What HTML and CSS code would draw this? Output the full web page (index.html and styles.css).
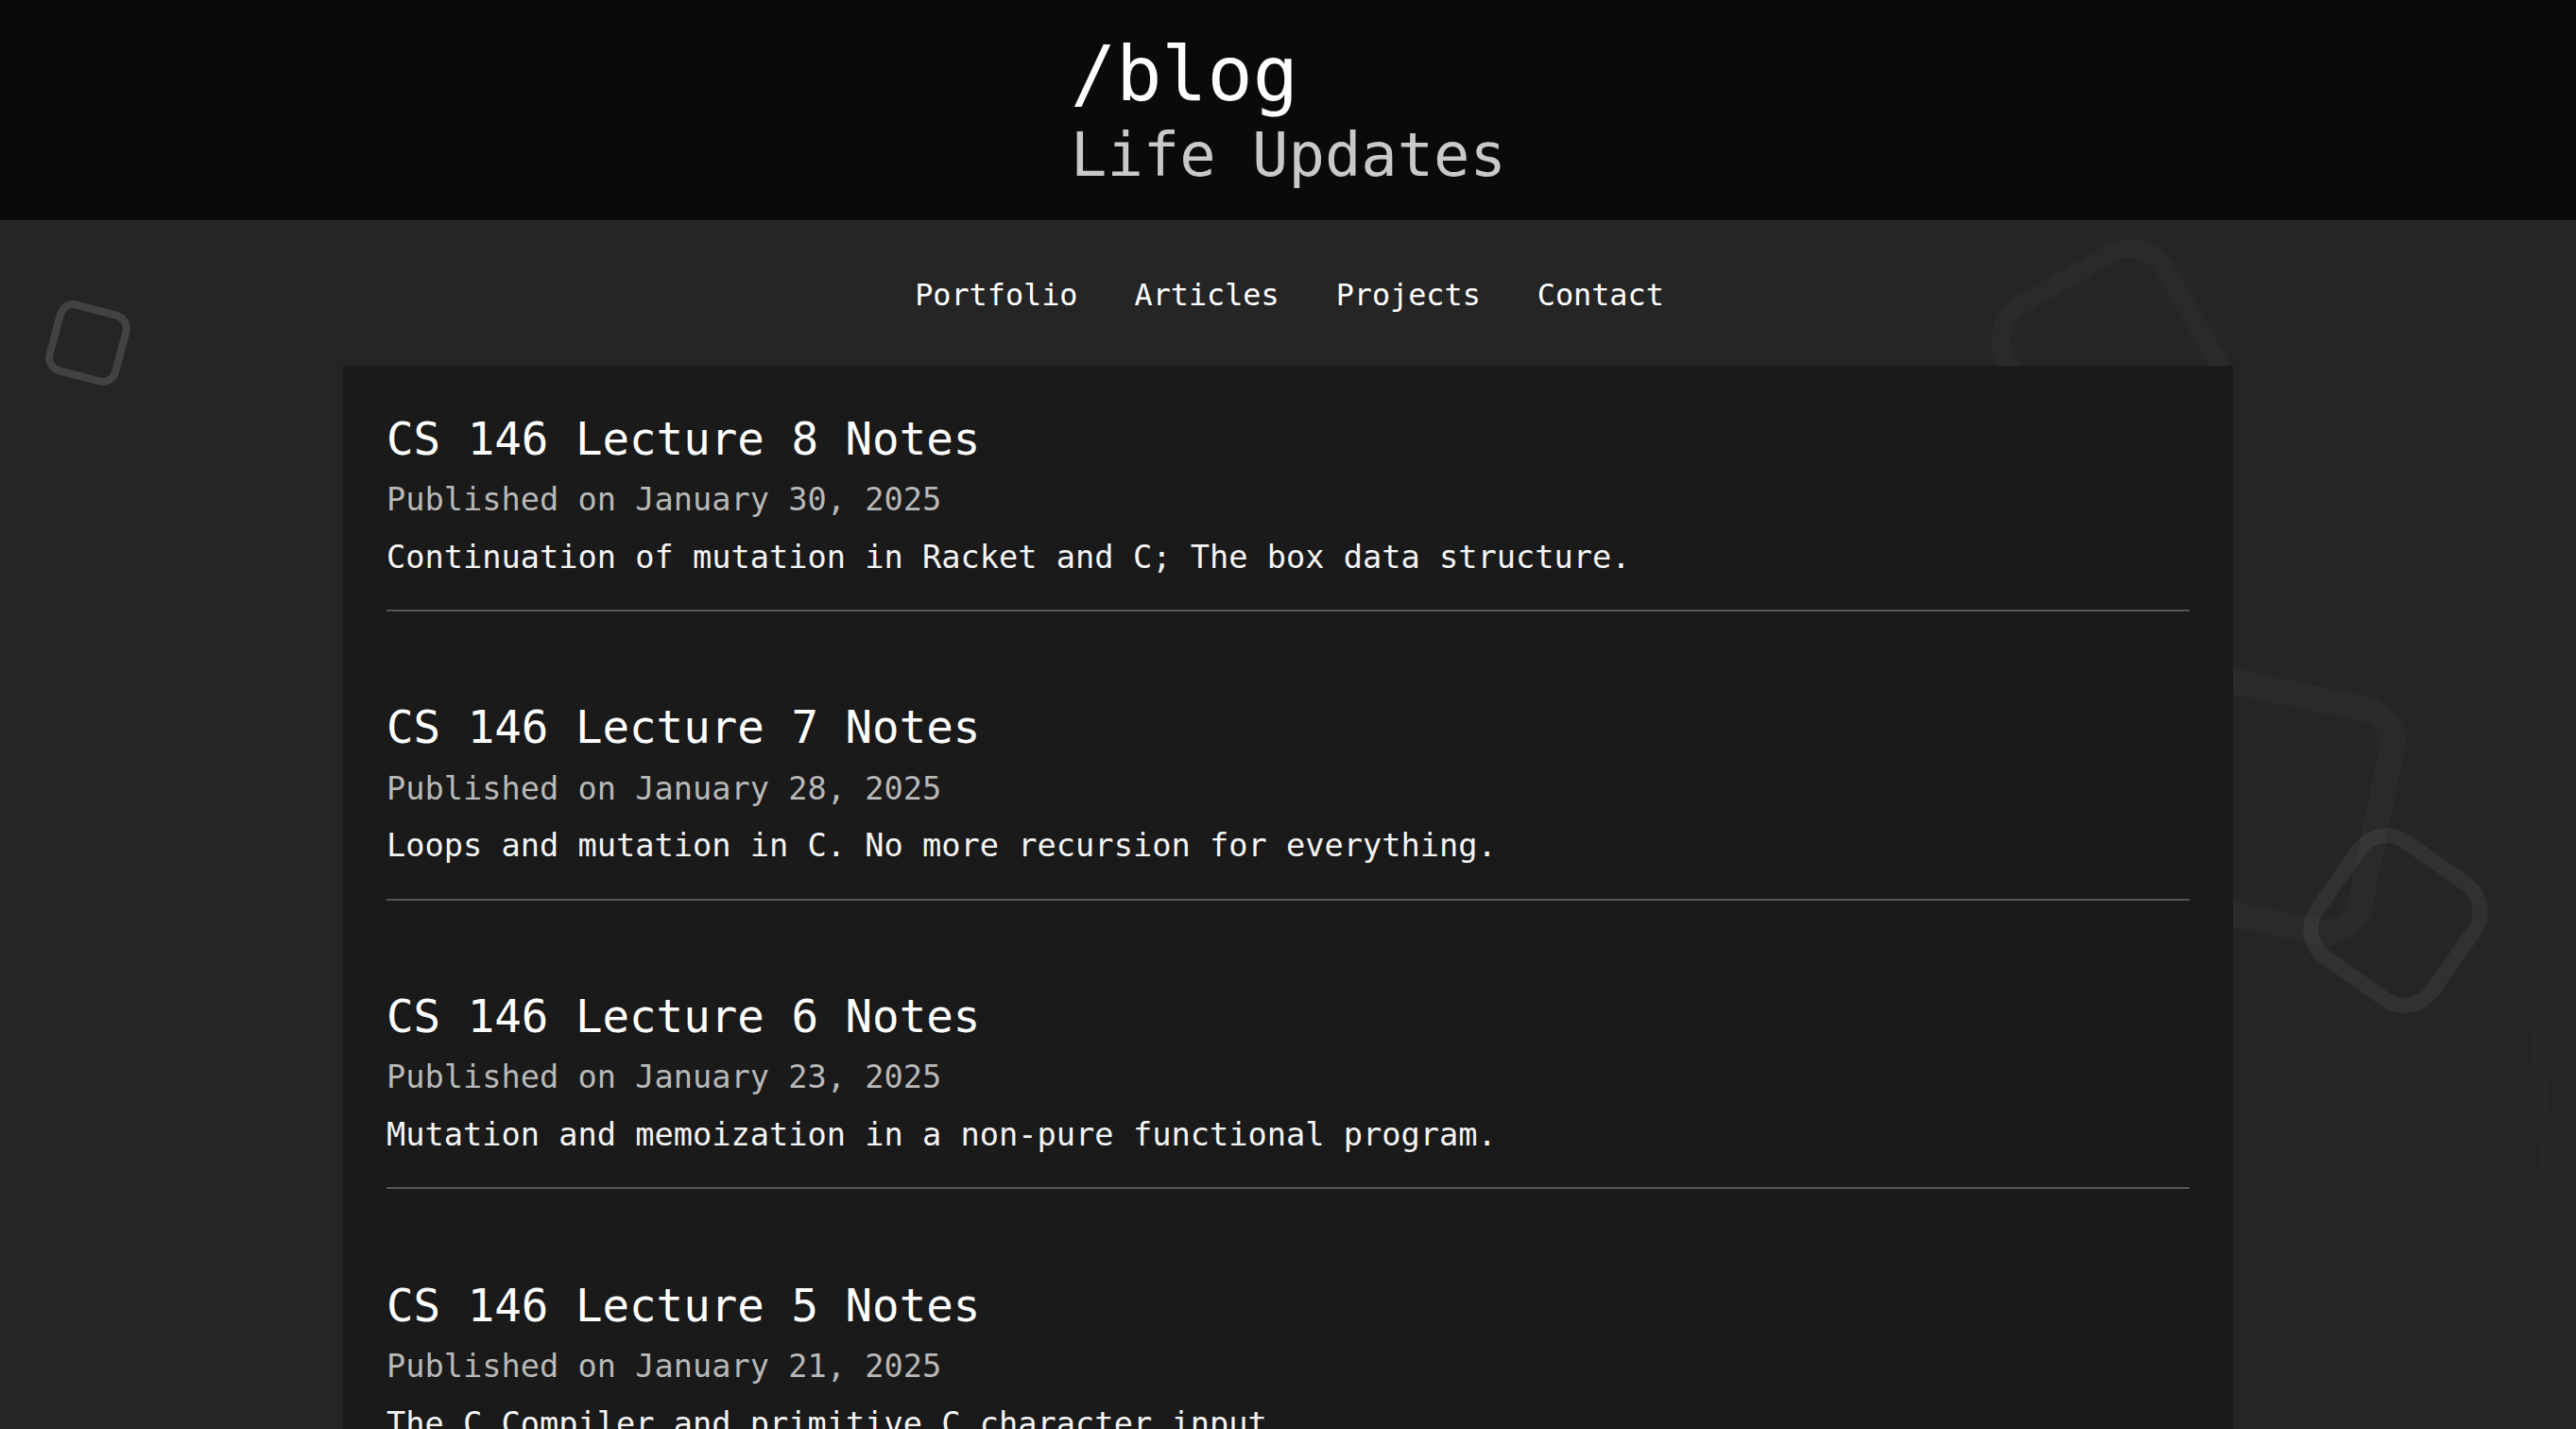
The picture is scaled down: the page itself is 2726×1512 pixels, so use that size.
FILE: index.html
```html
<!DOCTYPE html>
<html lang="en">
<head>
<meta charset="utf-8">
<title>/blog — Life Updates</title>
<link rel="stylesheet" href="styles.css">
</head>
<body>
<svg class="bg-shapes" viewBox="0 0 2726 1512" aria-hidden="true">
  <rect class="shape shape-faint" x="-96.5" y="-96.5" width="193" height="193" rx="43" stroke-width="20" transform="translate(2234 379) rotate(-30)"/>
  <rect class="shape shape-faint" x="-120.5" y="-120.5" width="241" height="241" rx="37" stroke-width="27" transform="translate(2396 851) rotate(11.7)"/>
  <rect class="shape shape-mid" x="-74.5" y="-74.5" width="149" height="149" rx="36" stroke-width="16" transform="translate(2535 974) rotate(35)"/>
  <rect class="shape shape-strong" x="-36" y="-36" width="72" height="72" rx="14" stroke-width="8" transform="translate(93 363) rotate(15)"/>
  <rect class="shape shape-ghost" x="-100" y="-100" width="200" height="200" rx="40" stroke-width="14" transform="translate(2790 1162) rotate(-4)"/>
</svg>

<header class="site-header">
  <div class="brand">
    <h1 class="brand-title">/blog</h1>
    <p class="brand-sub">Life Updates</p>
  </div>
</header>

<nav class="site-nav">
  <a class="nav-link" href="#">Portfolio</a>
  <a class="nav-link" href="#">Articles</a>
  <a class="nav-link" href="#">Projects</a>
  <a class="nav-link" href="#">Contact</a>
</nav>

<main class="posts">
  <article class="post">
    <h2 class="post-title">CS 146 Lecture 8 Notes</h2>
    <p class="post-date">Published on January 30, 2025</p>
    <p class="post-desc">Continuation of mutation in Racket and C; The box data structure.</p>
  </article>
  <article class="post">
    <h2 class="post-title">CS 146 Lecture 7 Notes</h2>
    <p class="post-date">Published on January 28, 2025</p>
    <p class="post-desc">Loops and mutation in C. No more recursion for everything.</p>
  </article>
  <article class="post">
    <h2 class="post-title">CS 146 Lecture 6 Notes</h2>
    <p class="post-date">Published on January 23, 2025</p>
    <p class="post-desc">Mutation and memoization in a non-pure functional program.</p>
  </article>
  <article class="post">
    <h2 class="post-title">CS 146 Lecture 5 Notes</h2>
    <p class="post-date">Published on January 21, 2025</p>
    <p class="post-desc">The C Compiler and primitive C character input.</p>
  </article>
  <article class="post">
    <h2 class="post-title">CS 146 Lecture 4 Notes</h2>
    <p class="post-date">Published on January 16, 2025</p>
    <p class="post-desc">Introduction to C: types, functions and printf.</p>
  </article>
</main>
</body>
</html>
```

FILE: styles.css
```css
html {
  scrollbar-width: none;
}
::-webkit-scrollbar {
  display: none;
}

body {
  margin: 0;
  position: relative;
  background: #252525;
  color: #ffffff;
  font-family: "DejaVu Sans Mono", "Liberation Mono", monospace;
}

.bg-shapes {
  position: absolute;
  top: 0;
  left: 0;
  width: 2726px;
  height: 1512px;
  z-index: 0;
  pointer-events: none;
  overflow: hidden;
}

.shape {
  fill: none;
}
.shape-faint {
  stroke: rgba(255, 255, 255, 0.022);
}
.shape-mid {
  stroke: rgba(255, 255, 255, 0.058);
}
.shape-strong {
  stroke: rgba(255, 255, 255, 0.135);
}
.shape-ghost {
  stroke: rgba(255, 255, 255, 0.01);
}

.site-header {
  position: relative;
  z-index: 1;
  background: #0a0a0a;
  display: flex;
  justify-content: center;
  padding: 33.8px 0 32px 1px;
}

.brand {
  display: flex;
  flex-direction: column;
  gap: 5.7px;
}

.brand-title {
  margin: 0;
  font-size: 80px;
  line-height: 90px;
  font-weight: normal;
  color: #ffffff;
}

.brand-sub {
  margin: 0;
  font-size: 63.8px;
  line-height: 71.5px;
  color: #c9c9c9;
}

.site-nav {
  position: relative;
  z-index: 1;
  display: flex;
  justify-content: center;
  gap: 60px;
  padding: 59.2px 0 54.8px 3px;
}

.nav-link {
  font-size: 31.8px;
  line-height: 40px;
  color: #ffffff;
  text-decoration: none;
}

.posts {
  position: relative;
  z-index: 1;
  width: 2000px;
  box-sizing: border-box;
  margin: 0 auto;
  padding: 48.8px 46px 60px;
  background: #1a1a1a;
}

.post {
  padding-bottom: 35.2px;
  border-bottom: 2px solid #555555;
  margin-bottom: 94.5px;
}

.post-title {
  margin: 0 0 16.3px;
  font-size: 47.45px;
  line-height: 57px;
  font-weight: normal;
  color: #ffffff;
}

.post-date {
  margin: 0 0 20.7px;
  font-size: 33.65px;
  line-height: 40px;
  color: #b8b8b8;
}

.post-desc {
  margin: 0;
  font-size: 33.65px;
  line-height: 40px;
  color: #f4f4f4;
}
```
